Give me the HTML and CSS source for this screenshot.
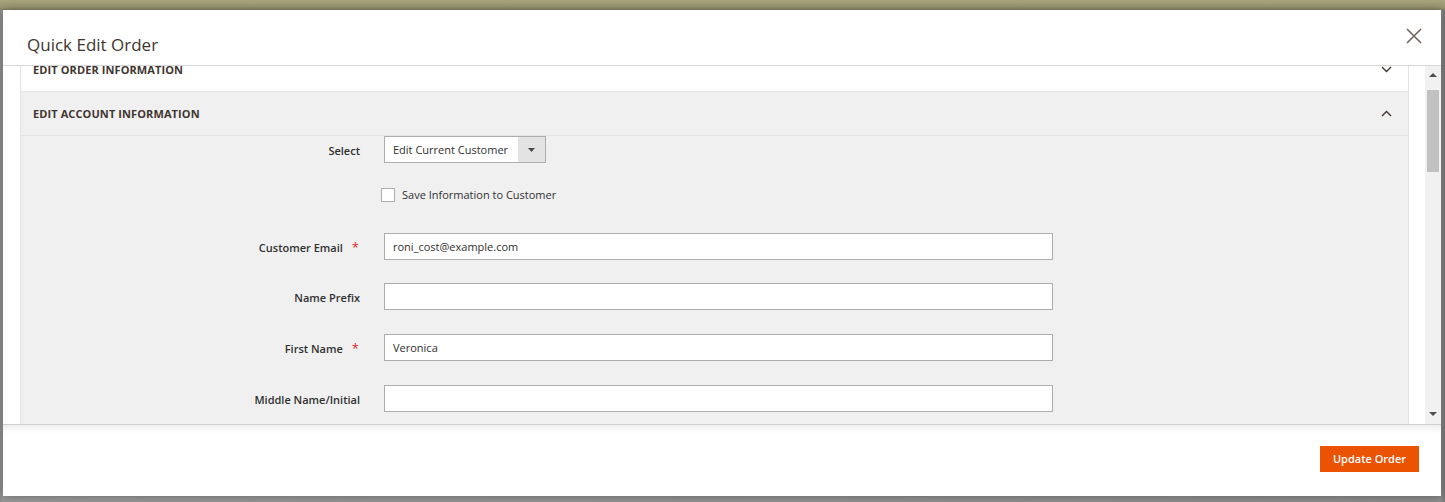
FILE: index.html
```html
<!DOCTYPE html>
<html lang="en">
<head>
<meta charset="utf-8">
<title>Quick Edit Order</title>
<link rel="stylesheet" href="styles.css">
</head>
<body>
<div class="backdrop-top"></div>
<div class="stage">
  <div class="modal">
    <header class="modal-header">
      <h1 class="modal-title">Quick Edit Order</h1>
      <button class="modal-close" aria-label="Close">
        <svg width="18" height="18" viewBox="0 0 18 18"><path d="M2 2 L16 16 M16 2 L2 16" stroke="#6f6661" stroke-width="1.6" fill="none"/></svg>
      </button>
    </header>
    <div class="modal-body">
      <div class="scroll-view">
        <div class="panel">
          <div class="section-head section-head-white scrolled">
            <span class="section-title">Edit Order Information</span>
            <svg class="chev" width="11" height="7" viewBox="0 0 11 7"><path d="M1 1 L5.5 5.5 L10 1" stroke="#41362f" stroke-width="1.4" fill="none"/></svg>
          </div>
          <div class="section-head section-head-grey">
            <span class="section-title">Edit Account Information</span>
            <svg class="chev" width="11" height="7" viewBox="0 0 11 7"><path d="M1 6 L5.5 1.5 L10 6" stroke="#41362f" stroke-width="1.4" fill="none"/></svg>
          </div>
          <div class="form">
            <div class="row row-select">
              <label class="label">Select</label>
              <div class="control">
                <div class="select">
                  <span class="select-value">Edit Current Customer</span>
                  <span class="select-arrow"><svg width="7" height="4" viewBox="0 0 7 4"><path d="M0 0 L7 0 L3.5 4 Z" fill="#4a4a4a"/></svg></span>
                </div>
              </div>
            </div>
            <div class="row row-check">
              <span class="label"></span>
              <div class="control check-control">
                <span class="checkbox"></span>
                <span class="check-label">Save Information to Customer</span>
              </div>
            </div>
            <div class="row row-first">
              <label class="label required">Customer Email</label>
              <div class="control"><div class="input">roni_cost@example.com</div></div>
            </div>
            <div class="row row-after-first">
              <label class="label">Name Prefix</label>
              <div class="control"><div class="input"></div></div>
            </div>
            <div class="row">
              <label class="label required">First Name</label>
              <div class="control"><div class="input">Veronica</div></div>
            </div>
            <div class="row">
              <label class="label">Middle Name/Initial</label>
              <div class="control"><div class="input"></div></div>
            </div>
          </div>
        </div>
        <div class="gutter"></div>
        <div class="scrollbar">
          <span class="sb-arrow sb-up"></span>
          <span class="sb-thumb"></span>
          <span class="sb-space"></span>
          <span class="sb-arrow sb-down"></span>
        </div>
      </div>
    </div>
    <footer class="modal-footer">
      <button class="btn-primary">Update Order</button>
    </footer>
  </div>
</div>
</body>
</html>
```

FILE: styles.css
```css
* { box-sizing: border-box; }

html, body {
  margin: 0;
  padding: 0;
  width: 1445px;
  height: 502px;
  overflow: hidden;
}

body {
  background: linear-gradient(90deg, #8d8d8d 0, #9a9a9a 3px, #8d8d8d 1441px, #777 1445px);
  font-family: "Open Sans", "Liberation Sans", sans-serif;
  color: #303030;
}

.backdrop-top {
  height: 10px;
  background: linear-gradient(#a8a57f, #9d9a74 70%, #8a8866);
}

.stage {
  padding: 0 4px 0 3px;
}

.modal {
  width: 1438px;
  height: 486px;
  background: #fff;
  display: flex;
  flex-direction: column;
  box-shadow: 0 0 10px rgba(0, 0, 0, 0.35);
}

.modal-header {
  height: 56px;
  border-bottom: 1px solid #d6d6d6;
  display: flex;
  align-items: flex-start;
  justify-content: space-between;
  padding: 0 0 0 24px;
}

.modal-title {
  margin: 25px 0 0;
  font-size: 17px;
  font-weight: 400;
  line-height: 20px;
  color: #41362f;
}

.modal-close {
  border: 0;
  background: none;
  padding: 0;
  margin: 17px 18px 0 0;
  width: 18px;
  height: 18px;
  display: block;
}
.modal-close svg { display: block; }

.modal-body {
  height: 358px;
  overflow: hidden;
}

.scroll-view {
  display: flex;
  height: 100%;
  padding-left: 17px;
}

.panel {
  width: 1389px;
  border-left: 1px solid #e3e3e3;
  border-right: 1px solid #e3e3e3;
  background: #f0f0f0;
  overflow: hidden;
}

.section-head {
  height: 44px;
  border-bottom: 1px solid #e3e3e3;
  display: flex;
  align-items: center;
  justify-content: space-between;
  padding: 0 16px 0 12px;
}
.section-head-white { background: #fff; }
.section-head-grey { background: #f0f0f0; }
.scrolled { margin-top: -18px; }

.section-title {
  font-size: 11px;
  font-weight: 700;
  text-transform: uppercase;
  color: #41362f;
  letter-spacing: 0.1px;
}

.chev { display: block; }

.form {
  display: flex;
  flex-direction: column;
}

.row {
  display: grid;
  grid-template-columns: 339px 1fr;
  column-gap: 24px;
  align-items: center;
  margin-top: 24px;
}
.row-select { margin-top: 0; }
.row-check { margin-top: 25px; }
.row-first { margin-top: 32px; }
.row-after-first { margin-top: 23px; }

.label {
  text-align: right;
  font-size: 11px;
  font-weight: 600;
  color: #303030;
  line-height: 16px;
  padding-top: 2px;
}
.label.required::after {
  content: "*";
  color: #e22626;
  font-size: 13px;
  font-weight: 400;
  margin-left: 9px;
  margin-right: 1px;
}

.control { display: flex; align-items: center; }

.select {
  width: 162px;
  height: 27px;
  border: 1px solid #adadad;
  background: #fff;
  display: flex;
  align-items: stretch;
}
.select-value {
  flex: 1;
  font-size: 11px;
  line-height: 25px;
  padding-left: 8px;
  color: #303030;
  white-space: nowrap;
}
.select-arrow {
  width: 27px;
  background: #e3e3e3;
  display: flex;
  align-items: center;
  justify-content: center;
}
.select-arrow svg { display: block; }

.check-control { margin-left: -3px; height: 13px; }
.checkbox {
  width: 14px;
  height: 14px;
  border: 1px solid #adadad;
  background: #fff;
  display: block;
}
.check-label {
  margin-left: 7px;
  font-size: 11px;
  color: #303030;
  line-height: 14px;
}

.input {
  width: 669px;
  height: 27px;
  border: 1px solid #adadad;
  background: #fff;
  font-size: 11px;
  line-height: 25px;
  padding-left: 8px;
  color: #303030;
}

.gutter {
  width: 16px;
  background: #fff;
}

.scrollbar {
  width: 16px;
  background: #f1f1f1;
  display: flex;
  flex-direction: column;
  align-items: center;
}
.sb-arrow {
  width: 0;
  height: 0;
  border-left: 4px solid transparent;
  border-right: 4px solid transparent;
  display: block;
}
.sb-up {
  border-bottom: 4px solid #505050;
  margin-top: 7px;
}
.sb-thumb {
  width: 12px;
  height: 82px;
  background: #c1c1c1;
  margin-top: 13px;
  display: block;
}
.sb-space { flex: 1; }
.sb-down {
  border-top: 4px solid #505050;
  margin-bottom: 8px;
}

.modal-footer {
  flex: 1;
  border-top: 1px solid #cfcfcf;
  box-shadow: inset 0 8px 8px -6px rgba(0, 0, 0, 0.10);
  display: flex;
  justify-content: flex-end;
  align-items: flex-start;
  padding: 21px 22px 0 0;
}

.btn-primary {
  background: #eb5202;
  border: 1px solid #eb5202;
  color: #fff;
  font-family: "Open Sans", "Liberation Sans", sans-serif;
  font-size: 11px;
  font-weight: 600;
  height: 26px;
  width: 99px;
  padding: 0;
  line-height: 24px;
}
```
